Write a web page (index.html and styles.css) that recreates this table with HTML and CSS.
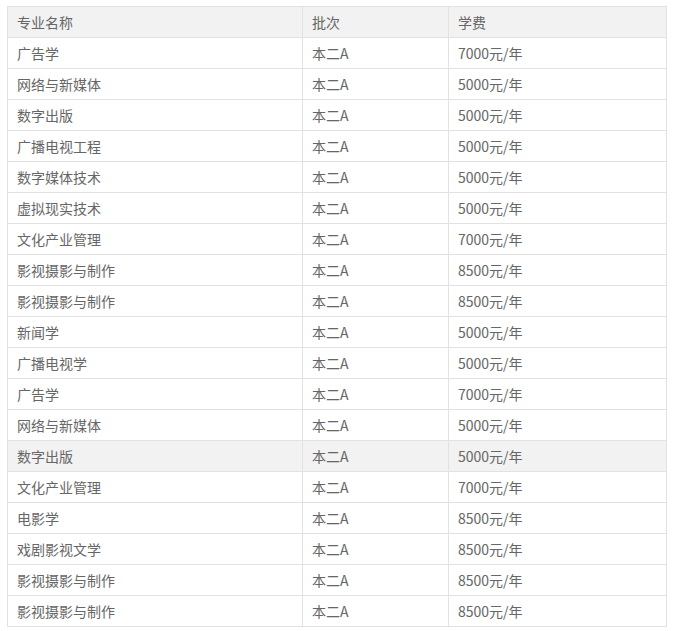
FILE: index.html
```html
<!DOCTYPE html>
<html lang="zh">
<head>
<meta charset="utf-8">
<link rel="stylesheet" href="styles.css">
</head>
<body>
<div class="wrap">
<table class="fees">
<colgroup><col class="c1"><col class="c2"><col class="c3"></colgroup>
<thead>
<tr><th>专业名称</th><th>批次</th><th>学费</th></tr>
</thead>
<tbody>
<tr><td>广告学</td><td>本二A</td><td>7000元/年</td></tr>
<tr><td>网络与新媒体</td><td>本二A</td><td>5000元/年</td></tr>
<tr><td>数字出版</td><td>本二A</td><td>5000元/年</td></tr>
<tr><td>广播电视工程</td><td>本二A</td><td>5000元/年</td></tr>
<tr><td>数字媒体技术</td><td>本二A</td><td>5000元/年</td></tr>
<tr><td>虚拟现实技术</td><td>本二A</td><td>5000元/年</td></tr>
<tr><td>文化产业管理</td><td>本二A</td><td>7000元/年</td></tr>
<tr><td>影视摄影与制作</td><td>本二A</td><td>8500元/年</td></tr>
<tr><td>影视摄影与制作</td><td>本二A</td><td>8500元/年</td></tr>
<tr><td>新闻学</td><td>本二A</td><td>5000元/年</td></tr>
<tr><td>广播电视学</td><td>本二A</td><td>5000元/年</td></tr>
<tr><td>广告学</td><td>本二A</td><td>7000元/年</td></tr>
<tr><td>网络与新媒体</td><td>本二A</td><td>5000元/年</td></tr>
<tr class="hl"><td>数字出版</td><td>本二A</td><td>5000元/年</td></tr>
<tr><td>文化产业管理</td><td>本二A</td><td>7000元/年</td></tr>
<tr><td>电影学</td><td>本二A</td><td>8500元/年</td></tr>
<tr><td>戏剧影视文学</td><td>本二A</td><td>8500元/年</td></tr>
<tr><td>影视摄影与制作</td><td>本二A</td><td>8500元/年</td></tr>
<tr><td>影视摄影与制作</td><td>本二A</td><td>8500元/年</td></tr>
</tbody>
</table>
</div>
</body>
</html>
```
FILE: styles.css
```css
html, body {
  margin: 0;
  padding: 0;
  background: #fff;
}
.wrap {
  padding: 6px 8px 0 7px;
}
.fees {
  border-collapse: collapse;
  width: 659px;
  table-layout: fixed;
  font-family: "Microsoft YaHei", "Noto Sans CJK SC", "Noto Sans", sans-serif;
  font-size: 14px;
  color: #666;
}
.c1 { width: 295px; }
.c2 { width: 146px; }
.c3 { width: 218px; }
.fees th,
.fees td {
  border: 1px solid #e2e2e2;
  height: 31px;
  padding: 0 9px;
  text-align: left;
  font-weight: normal;
  line-height: 20px;
  box-sizing: border-box;
  white-space: nowrap;
}
.fees thead th {
  background: #f2f2f2;
}
.fees tr.hl td {
  background: #f2f2f2;
}
```
